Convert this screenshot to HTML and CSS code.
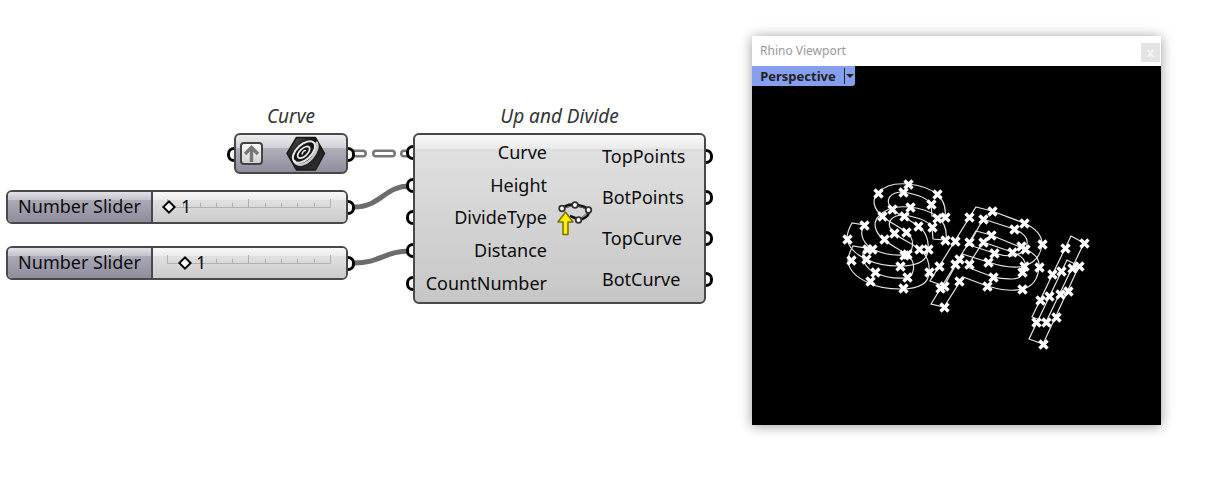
FILE: index.html
```html
<!DOCTYPE html>
<html lang="en">
<head>
<meta charset="utf-8">
<title>Up and Divide</title>
<link rel="stylesheet" href="styles.css">
</head>
<body>
<main class="canvas">
  <svg class="wires" aria-hidden="true">
    <path class="wire-list" d="M354 153.500H363M376 153.500H392M404 153.500H409"/>
    <path class="wire-list-core" d="M354 153.500H363M376 153.500H392M404 153.500H409"/>
    <path class="wire" d="M354 207C381 207 384 186 410 186"/>
    <path class="wire" d="M354 263C381 263 384 251 410 251"/>
  </svg>

  <section class="node param-node">
    <h2 class="node-title">Curve</h2>
    <div class="body param-body">
      <i class="port port-in"></i>
      <button class="graft" type="button" aria-label="Graft">
        <svg width="19" height="19" viewBox="0 0 19 19"><path d="M9.500 18V4M3 10L9.500 3.500L16 10" fill="none" stroke="#777" stroke-width="3.400"/></svg>
      </button>
      <svg class="hex" width="40" height="36" viewBox="0 0 40 36" aria-hidden="true">
        <defs>
          <linearGradient id="hexfill" x1="0" y1="0" x2="1" y2="1"><stop offset="0" stop-color="#666"/><stop offset=".4" stop-color="#111"/><stop offset="1" stop-color="#3a3a3a"/></linearGradient>
        </defs>
        <path d="M10.500 1.500H29.500L38.500 17.500L29.500 34H10.500L1 17.500Z" fill="url(#hexfill)" stroke="#181818" stroke-width="1.500" stroke-linejoin="round"/>
        <path d="M8 24C10 31 19 30 26 22C31 16 33 9 30 6" fill="none" stroke="#c8c8c8" stroke-width="2.600"/>
        <g transform="rotate(-43 18 16)" fill="none" stroke="#e8e8e8">
          <ellipse cx="18" cy="16" rx="13.500" ry="7.500" stroke-width="2"/>
          <ellipse cx="17.500" cy="16" rx="7.500" ry="3.800" stroke-width="1.800"/>
          <path d="M15 16.500C17 14.500 20 15 20 16.500" stroke-width="1.500"/>
        </g>
      </svg>
      <i class="port port-out"></i>
    </div>
  </section>

  <section class="node slider-node slider-a">
    <div class="body slider-body">
      <label class="slider-label" for="height">Number Slider</label>
      <div class="slider-track">
        <svg class="ticks" viewBox="0 0 164 12" aria-hidden="true"><path d="M0.500 1V9.500H163.500V1M16.500 5V10M33.500 5V10M49.500 5V10M65.500 5V10M81.500 1V10M98.500 5V10M114.500 5V10M130.500 5V10M147.500 5V10"/></svg>
        <input class="range" id="height" type="range" min="1" max="10" value="1">
        <output class="value" for="height">1</output>
      </div>
      <i class="port port-out"></i>
    </div>
  </section>

  <section class="node slider-node slider-b">
    <div class="body slider-body">
      <label class="slider-label" for="distance">Number Slider</label>
      <div class="slider-track">
        <svg class="ticks" viewBox="0 0 164 12" aria-hidden="true"><path d="M0.500 1V9.500H163.500V1M16.500 5V10M33.500 5V10M49.500 5V10M65.500 5V10M81.500 1V10M98.500 5V10M114.500 5V10M130.500 5V10M147.500 5V10"/></svg>
        <input class="range" id="distance" type="range" min="0" max="10" value="1">
        <output class="value value-b" for="distance">1</output>
      </div>
      <i class="port port-out"></i>
    </div>
  </section>

  <section class="node component-node">
    <h2 class="node-title">Up and Divide</h2>
    <div class="body component-body">
      <ul class="params inputs">
        <li><i class="port port-in"></i>Curve</li>
        <li><i class="port port-in"></i>Height</li>
        <li><i class="port port-in"></i>DivideType</li>
        <li><i class="port port-in"></i>Distance</li>
        <li><i class="port port-in"></i>CountNumber</li>
      </ul>
      <svg class="component-icon" width="40" height="40" viewBox="0 0 40 40" aria-hidden="true">
        <path d="M6 11C11 7 16 6 20 7C27 8 34 10 34 13C34 18 29 21 24 22C21 20 18 19 15 18" fill="none" stroke="#111" stroke-width="2.800"/>
        <path d="M7 11L20 7M21 7L34 12M34 13L24 22" fill="none" stroke="#744" stroke-width="1"/>
        <g fill="#fff" stroke="#333" stroke-width="1.800"><circle cx="7" cy="10.500" r="2.800"/><circle cx="20" cy="7" r="2.800"/><circle cx="33.500" cy="12" r="2.800"/><circle cx="23.500" cy="22" r="2.800"/></g>
        <path d="M10.500 14L18 24H13V36.500H8V24H3Z" fill="#ffef00" stroke="#777200" stroke-width="1.500" stroke-linejoin="round"/>
      </svg>
      <ul class="params outputs">
        <li>TopPoints<i class="port port-out"></i></li>
        <li>BotPoints<i class="port port-out"></i></li>
        <li>TopCurve<i class="port port-out"></i></li>
        <li>BotCurve<i class="port port-out"></i></li>
      </ul>
    </div>
  </section>

  <section class="window">
    <header class="window-bar">
      <h2 class="window-title">Rhino Viewport</h2>
      <button class="close" type="button" aria-label="Close">x</button>
    </header>
    <div class="scene">
      <div class="view-menu">
        <button class="view-name" type="button">Perspective</button>
        <button class="view-drop" type="button" aria-label="View options"><svg width="8" height="4" viewBox="0 0 8 4"><path d="M0 0H8L4 4Z" fill="#222"/></svg></button>
      </div>
      <svg class="drawing" viewBox="752 66 409 359" role="img" aria-label="Divided curves">
        <defs>
          <marker id="cross" markerUnits="userSpaceOnUse" markerWidth="14" markerHeight="14" refX="6.500" refY="6.500"><path d="M3 3L11 11M11 3L3 11" stroke="#fff" stroke-width="3.400"/></marker>
          <path id="letter-s" d="M931 204C927 197 915 194 903 192C890 192 884 200 892 209C899 216 909 219 918 226C926 231 929 241 928 249C928 263 914 266 900 266C887 266 875 264 866 259C857 255 849 249 847 239C847 233 849 228 852 223L864 225C861 230 859 240 872 249C881 253 893 256 904 255C914 254 916 239 906 232C898 226 889 222 882 216C874 209 871 200 878 193C886 184 897 183 908 184C918 185 929 188 937 194C944 200 946 209 945 217L932 216Z"/>
        </defs>
        <g class="curves">
          <use href="#letter-s"/>
          <use href="#letter-s" x="1" y="23"/>
          <path d="M976 207L992 211L1024 223C1035 228 1042 235 1042 244C1041 256 1034 263 1024 266C1013 269 1000 266 988 262L962 254L944 286L930 281Z"/>
          <path d="M983 219L1014 229C1024 233 1028 238 1027 244C1026 252 1020 254 1012 256C1005 256 1000 255 994 253L969 245Z"/>
          <path d="M976 231L991 235L1025 249C1034 253 1040 259 1039 267C1038 280 1032 287 1022 289C1010 292 998 289 987 286L963 277L944 307L931 304Z"/>
          <path d="M983 242L1012 252C1023 256 1026 262 1025 267C1024 275 1020 279 1012 279C1005 279 1000 278 993 277L967 267Z"/>
          <path d="M1071 236L1084 243L1046 322L1032 317Z"/>
          <path d="M1067 260L1079 266L1043 344L1029 339Z"/>
        </g>
        <polyline class="points" points="908,184 878,193 903,192 937,194 931,204 892,209 910,207 882,216 904,216 945,217 937,218 918,226 932,227 864,225 894,233 906,232 884,239 847,239 945,240 955,241 867,249 872,249 866,259 919,249 928,249 907,254 904,255 900,266 851,260 929,272 875,272 870,281 907,277 903,288"/>
        <polyline class="points" points="992,211 969,217 983,219 1024,223 1014,229 991,235 969,242 983,242 1042,244 1021,246 1025,249 1012,252 994,253 959,259 988,262 955,264 969,264 1024,266 1022,272 939,266 1039,267 993,277 959,281 987,286 1022,289 944,286 940,288 944,307"/>
        <polyline class="points" points="1084,243 1065,248 1079,266 1072,268 1061,271 1052,274 1068,291 1060,294 1049,296 1040,300 1056,317 1036,322 1046,322 1043,344"/>
      </svg>
    </div>
  </section>
</main>
</body>
</html>
```

FILE: styles.css
```css
* {
  box-sizing: border-box;
}

body {
  margin: 0;
  background: #fff;
  color: #0c0c0c;
  font: 18px/24px "Noto Sans", "Open Sans", sans-serif;
}

button {
  padding: 0;
  border: 0;
  font: inherit;
}

.canvas {
  position: relative;
  min-height: 100vh;
  overflow: hidden;
}

.wires {
  position: absolute;
  inset: 0;
  width: 100%;
  height: 100%;
  fill: none;
}

.wire {
  stroke: #6c6c6c;
  stroke-width: 5;
}

.wire-list {
  stroke: #777;
  stroke-width: 8;
  stroke-linecap: round;
}

.wire-list-core {
  stroke: #fff;
  stroke-width: 3;
  stroke-linecap: round;
}

/* Nodes on the free canvas */
.node {
  position: absolute;
}

.param-node {
  left: 234px;
  top: 104px;
  width: 114px;
}

.slider-node {
  left: 6px;
  width: 342px;
}

.slider-a {
  top: 190px;
}

.slider-b {
  top: 246px;
}

.component-node {
  left: 413px;
  top: 104px;
  width: 293px;
}

.node-title {
  margin: 0 0 5px;
  color: #333;
  font-size: 19px;
  font-weight: 400;
  font-style: italic;
  text-align: center;
}

.body {
  position: relative;
  display: flex;
  border: 2px solid #484848;
  border-radius: 6px;
}

.param-body {
  align-items: center;
  justify-content: space-between;
  height: 41px;
  padding: 0 20px 0 4px;
  background: linear-gradient(#ededf0, #cfcfd5 35%, #b0afba 36%, #8f8d9d);
}

.graft {
  display: grid;
  place-items: center;
  width: 23px;
  height: 23px;
  border: 2px solid #444;
  border-radius: 4px;
  background: linear-gradient(#fafafa, #d2d2d2);
}

.slider-body {
  height: 34px;
}

.slider-label {
  width: 145px;
  padding-top: 2px;
  border-right: 2px solid #484848;
  border-radius: 4px 0 0 4px;
  background: linear-gradient(#e0e0e6, #c6c5ce 25%, #aaa9b6 27%, #8f8d9d);
  text-align: center;
}

.slider-track {
  position: relative;
  display: flex;
  flex: 1;
  align-items: center;
  padding: 0 9px 0 11px;
  border-radius: 0 4px 4px 0;
  background: linear-gradient(#f8f8f8, #ececec 25%, #e0e0e0 27%, #cbcbcb);
}

.ticks {
  position: absolute;
  left: 14px;
  right: 15px;
  top: 6px;
  height: 12px;
  fill: none;
  stroke: #b0b0b0;
}

.range {
  position: relative;
  width: 100%;
  height: 16px;
  margin: 0;
  background: transparent;
  appearance: none;
}

.range::-webkit-slider-thumb {
  width: 10px;
  height: 10px;
  border: 2px solid #000;
  background: #fff;
  appearance: none;
  transform: rotate(45deg);
}

.value {
  position: absolute;
  left: 28px;
  top: 2px;
}

.value-b {
  left: 43px;
}

.component-body {
  justify-content: space-between;
  height: 171px;
  padding: 1px 0 3px;
  background: linear-gradient(#fafafa, #ebebeb 13px, #e0e0e0 14px, #c6c6c6);
}

.params {
  display: flex;
  flex-direction: column;
  margin: 0;
  padding: 0;
  list-style: none;
}

.params li {
  position: relative;
  display: flex;
  flex: 1;
  align-items: center;
}

.inputs {
  width: 132px;
}

.inputs li {
  justify-content: flex-end;
}

.outputs {
  width: 102px;
}

.component-icon {
  align-self: center;
}

/* Half-round grips that stick out past the node's border */
.port {
  position: absolute;
  top: 50%;
  width: 7px;
  height: 15px;
  margin-top: -7px;
  border: 3px solid #000;
  background: #fff;
}

.port-in {
  left: -9px;
  border-right: 0;
  border-radius: 8px 0 0 8px;
}

.port-out {
  right: -9px;
  border-left: 0;
  border-radius: 0 8px 8px 0;
}

/* Floating viewport window */
.window {
  position: absolute;
  left: 752px;
  top: 36px;
  width: 409px;
  background: #fff;
  box-shadow: 0 1px 12px rgba(0, 0, 0, .4);
}

.window-bar {
  display: flex;
  align-items: center;
  justify-content: space-between;
  height: 30px;
  padding: 0 1px 0 8px;
}

.window-title {
  margin: 0;
  color: #999;
  font-size: 12px;
  font-weight: 400;
}

.close {
  width: 19px;
  height: 19px;
  margin-top: 3px;
  background: #e4e4e4;
  color: #f6f6f6;
  font-size: 12px;
  font-weight: 700;
  line-height: 16px;
}

.scene {
  position: relative;
  background: #000;
}

.view-menu {
  position: absolute;
  left: 0;
  top: 0;
  display: flex;
  height: 20px;
  border-radius: 0 0 3px 0;
  background: #859eed;
}

.view-name {
  width: 92px;
  background: transparent;
  color: #222;
  font-size: 13px;
  font-weight: 700;
  line-height: 20px;
}

.view-drop {
  display: grid;
  place-items: center;
  width: 11px;
  margin: 2px 0;
  border-left: 1px solid #222;
  background: transparent;
}

.drawing {
  display: block;
  width: 100%;
}

.curves {
  fill: none;
  stroke: #e4e4e4;
  stroke-width: 1.2px;
}

.points {
  fill: none;
  stroke: none;
  marker: url(#cross);
}
```
